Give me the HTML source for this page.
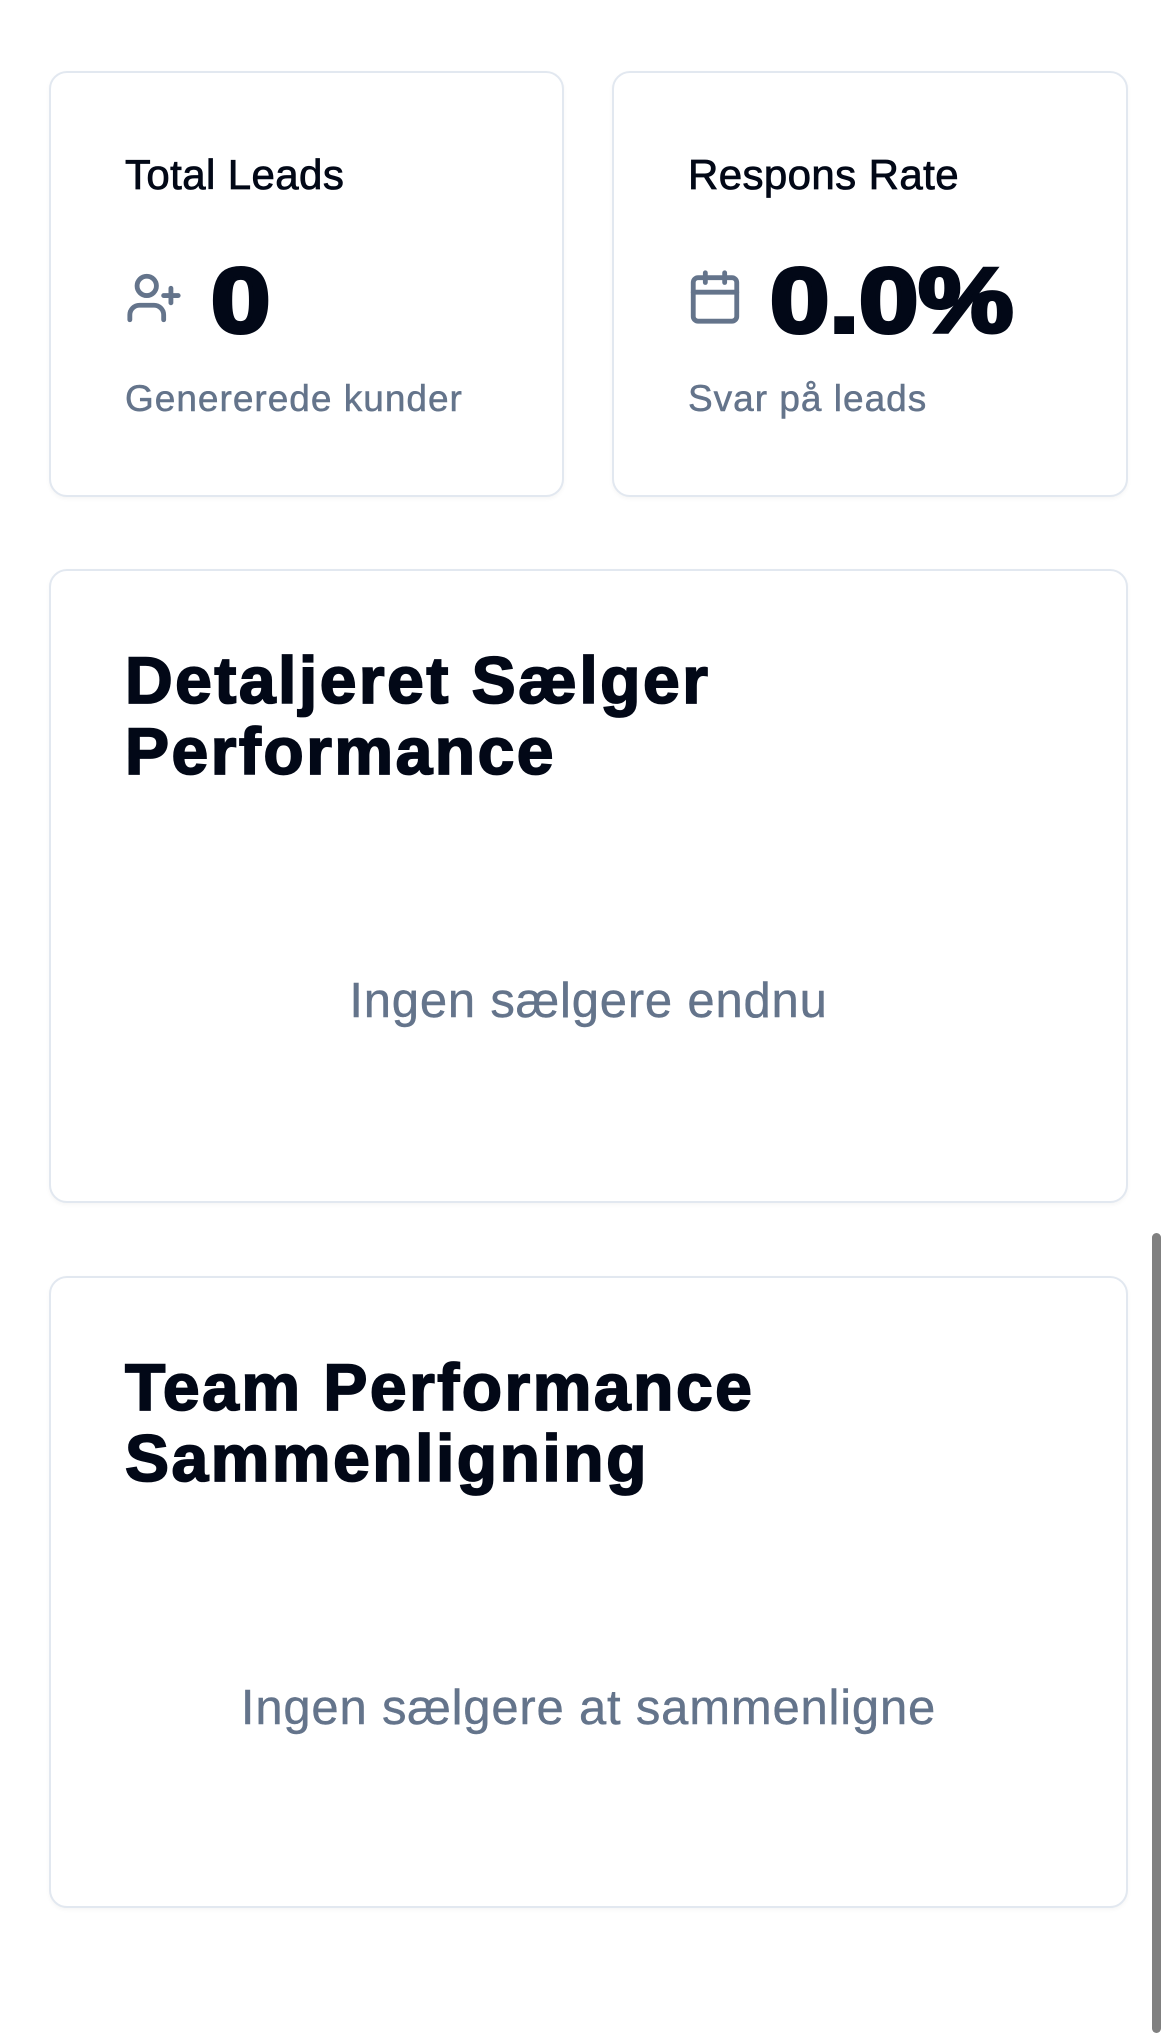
<!DOCTYPE html>
<html><head><meta charset="utf-8"><style>
*{margin:0;padding:0;box-sizing:border-box}
body{width:1170px;height:2009px;background:#fff;font-family:"Liberation Sans",sans-serif;position:relative;overflow:hidden}
.card{position:absolute;background:#fff;border:2px solid #e2e8f0;border-radius:18px;box-shadow:0 2px 4px rgba(0,0,0,0.04)}
.lbl{position:absolute;left:74px;top:78px;font-size:42px;color:#020817;font-weight:400;-webkit-text-stroke:0.8px #020817;letter-spacing:0.4px}
.num{position:absolute;font-size:92px;font-weight:700;color:#020817;line-height:1;top:182px;-webkit-text-stroke:4px #020817;transform:scaleX(1.16);transform-origin:left}
.sub{position:absolute;left:74px;top:305px;font-size:37px;color:#64748b;letter-spacing:1px;-webkit-text-stroke:0.5px #64748b}
.icon{position:absolute;top:196px}
h2{position:absolute;left:74px;top:74px;font-size:66px;line-height:71px;font-weight:700;color:#020817;letter-spacing:2.5px;-webkit-text-stroke:1.8px #020817}
.empty{position:absolute;left:0;right:0;text-align:center;font-size:49px;color:#64748b;letter-spacing:0.8px;-webkit-text-stroke:0.4px #64748b}
.sb{position:absolute;left:1152px;top:1233px;width:9px;height:800px;background:#808080;border-radius:5px}
</style></head><body>
<div class="card" style="left:49px;top:71px;width:515px;height:426px">
<div class="lbl">Total Leads</div>
<svg class="icon" style="left:74px" width="58" height="58" viewBox="0 0 24 24" fill="none" stroke="#64748b" stroke-width="2" stroke-linecap="round" stroke-linejoin="round"><path d="M16 21v-2a4 4 0 0 0-4-4H6a4 4 0 0 0-4 4v2"/><circle cx="9" cy="7" r="4"/><line x1="19" y1="8" x2="19" y2="14"/><line x1="22" y1="11" x2="16" y2="11"/></svg>
<div class="num" style="left:160px">0</div>
<div class="sub">Genererede kunder</div>
</div>
<div class="card" style="left:612px;top:71px;width:516px;height:426px">
<div class="lbl">Respons Rate</div>
<svg class="icon" style="left:72px;top:194px" width="58" height="60" viewBox="0 0 24 24" fill="none" stroke="#64748b" stroke-width="2" stroke-linecap="round" stroke-linejoin="round"><rect x="3" y="4" width="18" height="18" rx="2"/><line x1="16" y1="2" x2="16" y2="6"/><line x1="8" y1="2" x2="8" y2="6"/><line x1="3" y1="10" x2="21" y2="10"/></svg>
<div class="num" style="left:156px">0.0%</div>
<div class="sub">Svar på leads</div>
</div>
<div class="card" style="left:49px;top:569px;width:1079px;height:634px">
<h2>Detaljeret Sælger<br>Performance</h2>
<div class="empty" style="top:402px">Ingen sælgere endnu</div>
</div>
<div class="card" style="left:49px;top:1276px;width:1079px;height:632px">
<h2>Team Performance<br>Sammenligning</h2>
<div class="empty" style="top:402px">Ingen sælgere at sammenligne</div>
</div>
<div class="sb"></div>
</body></html>
